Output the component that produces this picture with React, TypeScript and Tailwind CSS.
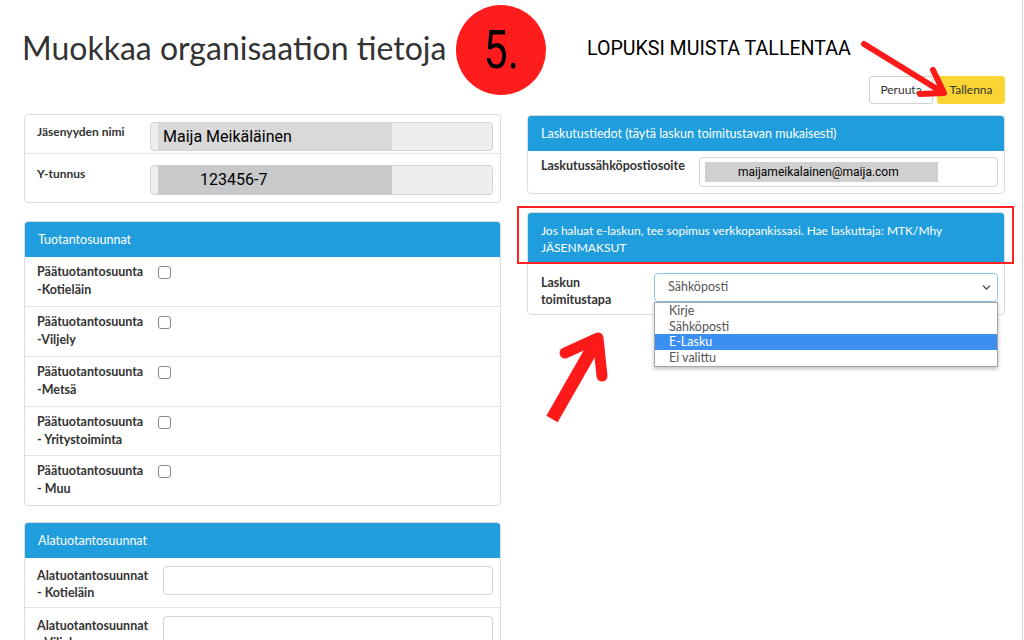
import React from "react";
import { ChevronDown } from "lucide-react";

const font = { fontFamily: "Lato, 'Open Sans', sans-serif" };

function Checkbox() {
  return <div className="mt-[9px] h-[13px] w-[13px] rounded-[3px] border border-[#8a8a8a] bg-white" />;
}

function BlueHeader({ children }: { children: React.ReactNode }) {
  return (
    <div className="h-[35px] rounded-t-[3px] bg-[#1f9ddc] pl-[13px] text-[12.5px] leading-[35px] text-white">
      {children}
    </div>
  );
}

const prodRows = [
  { a: "Päätuotantosuunta", b: "-Kotieläin", h: "h-[49px]" },
  { a: "Päätuotantosuunta", b: "-Viljely", h: "h-[50px]" },
  { a: "Päätuotantosuunta", b: "-Metsä", h: "h-[50px]" },
  { a: "Päätuotantosuunta", b: "- Yritystoiminta", h: "h-[49px]" },
  { a: "Päätuotantosuunta", b: "- Muu", h: "h-[50px]" },
];

export default function App() {
  return (
    <div className="relative flex h-[640px] w-[1024px] overflow-hidden bg-white text-[#333]" style={font}>
      <div className="w-[1022px] pl-[24px] pr-[17px]">
        {/* header */}
        <div className="flex h-[114px] items-start justify-between">
          <h1 className="-ml-[2px] pt-[27px] text-[32px] leading-[42px] text-[#333]">Muokkaa organisaation tietoja</h1>
          <div className="mt-[76px] flex gap-[4px]">
            <button className="h-[28px] w-[64px] rounded-[3px] border border-[#d0d0d0] bg-white text-[12px] text-[#333]">Peruuta</button>
            <button className="h-[28px] w-[68px] rounded-[3px] bg-[#fbd533] text-[12px] text-[#333]">Tallenna</button>
          </div>
        </div>

        <div className="grid grid-cols-[477px_478px] gap-x-[26px]">
          {/* left column */}
          <div>
            <div className="rounded-[4px] border border-[#dcdcdc] bg-white">
              <div className="flex h-[38px]">
                <div className="w-[125px] pl-[12px] pt-[9px] text-[12px] font-bold leading-[16px]">Jäsenyyden nimi</div>
                <div className="flex-1 pr-[7px] pt-[7px]">
                  <div className="flex h-[29px] rounded-[4px] border border-[#d4d4d4] bg-[#eeeeee]">
                    <div className="ml-[7px] h-full w-[234px] bg-[#d9d9d9] pl-[5px] text-[16px] leading-[27px] text-black" style={{ fontFamily: "Roboto, sans-serif" }}>
                      Maija Meikäläinen
                    </div>
                  </div>
                </div>
              </div>
              <div className="flex h-[49px] border-t border-[#e3e3e3]">
                <div className="w-[125px] pl-[12px] pt-[12px] text-[12px] font-bold leading-[16px]">Y-tunnus</div>
                <div className="flex-1 pr-[7px] pt-[11px]">
                  <div className="flex h-[30px] rounded-[4px] border border-[#d4d4d4] bg-[#eeeeee]">
                    <div className="ml-[7px] h-full w-[234px] bg-[#c7c9cb] pl-[42px] text-[16px] leading-[28px] text-black" style={{ fontFamily: "Roboto, sans-serif" }}>
                      123456-7
                    </div>
                  </div>
                </div>
              </div>
            </div>

            <div className="mt-[18px] rounded-[4px] border border-[#dcdcdc] bg-white">
              <BlueHeader>Tuotantosuunnat</BlueHeader>
              {prodRows.map((r, i) => (
                <div key={i} className={`flex ${r.h} ${i > 0 ? "border-t border-[#e3e3e3]" : ""}`}>
                  <div className="w-[133px] pl-[12px] pt-[6px] text-[12.5px] font-bold leading-[18px]">
                    <div>{r.a}</div>
                    <div>{r.b}</div>
                  </div>
                  <Checkbox />
                </div>
              ))}
            </div>

            <div className="mt-[16px] rounded-[4px] border border-[#dcdcdc] bg-white">
              <BlueHeader>Alatuotantosuunnat</BlueHeader>
              <div className="flex h-[49px]">
                <div className="w-[138px] pl-[12px] pt-[9px] text-[12.5px] font-bold leading-[17px]">
                  <div>Alatuotantosuunnat</div>
                  <div>- Kotieläin</div>
                </div>
                <div className="flex-1 pr-[7px] pt-[8px]">
                  <div className="h-[29px] rounded-[4px] border border-[#d4d4d4] bg-white" />
                </div>
              </div>
              <div className="flex h-[50px] border-t border-[#e3e3e3]">
                <div className="w-[138px] pl-[12px] pt-[9px] text-[12.5px] font-bold leading-[17px]">
                  <div>Alatuotantosuunnat</div>
                  <div>- Viljely</div>
                </div>
                <div className="flex-1 pr-[7px] pt-[8px]">
                  <div className="h-[29px] rounded-[4px] border border-[#d4d4d4] bg-white" />
                </div>
              </div>
            </div>
          </div>

          {/* right column */}
          <div className="mt-[1px]">
            <div className="rounded-[4px] border border-[#dcdcdc] bg-white">
              <BlueHeader>Laskutustiedot (täytä laskun toimitustavan mukaisesti)</BlueHeader>
              <div className="flex h-[42px]">
                <div className="w-[171px] pl-[13px] pt-[7px] text-[12.5px] font-bold leading-[16px]">Laskutussähköpostiosoite</div>
                <div className="flex-1 pr-[6px] pt-[6px]">
                  <div className="h-[30px] rounded-[4px] border border-[#d4d4d4] bg-white pl-[5px] pt-[4px]">
                    <div className="h-[20px] w-[233px] bg-[#d0d0d0] pl-[33px] text-[12px] leading-[20px] text-black" style={{ fontFamily: "Roboto, sans-serif" }}>
                      maijameikalainen@maija.com
                    </div>
                  </div>
                </div>
              </div>
            </div>

            <div className="mt-[18px] rounded-[4px] border border-[#dcdcdc] bg-white">
              <div className="h-[50px] rounded-t-[3px] bg-[#1f9ddc] pl-[13px] pt-[9px] text-[12px] leading-[17px] text-white">
                Jos haluat e-laskun, tee sopimus verkkopankissasi. Hae laskuttaja: MTK/Mhy
                <br />
                JÄSENMAKSUT
              </div>
              <div className="flex h-[51px]">
                <div className="w-[126px] pl-[13px] pt-[11px] text-[12.5px] font-bold leading-[17px]">
                  <div>Laskun</div>
                  <div>toimitustapa</div>
                </div>
                <div className="relative flex-1 pr-[6px] pt-[10px]">
                  <div className="flex h-[29px] items-center justify-between rounded-[4px] border border-[#8fc3f0] bg-white pl-[13px] pr-[4px] text-[12.5px] text-[#555]">
                    <span>Sähköposti</span>
                    <ChevronDown size={13} strokeWidth={2.5} className="text-[#444]" />
                  </div>
                  <div className="absolute left-0 right-[6px] top-[39px] z-10 border border-[#a3a3a3] bg-white text-[12.5px] leading-[16px] text-[#555] shadow-[0_2px_4px_rgba(0,0,0,0.25)]">
                    <div className="h-[16px] pl-[14px]">Kirje</div>
                    <div className="h-[15px] pl-[14px]">Sähköposti</div>
                    <div className="h-[16px] bg-[#3a8ff0] pl-[14px] text-white">E-Lasku</div>
                    <div className="h-[16px] pl-[14px]">Ei valittu</div>
                  </div>
                </div>
              </div>
            </div>
          </div>
        </div>
      </div>
      <div className="h-full w-px bg-[#d8d8d8]" />
      <div className="h-full w-px bg-white" />

      {/* annotations */}
      <div className="absolute left-[456px] top-[5px] flex h-[90px] w-[90px] items-center justify-center rounded-full bg-[#ff1c1c]">
        <span className="scale-x-[0.8] text-[54px] leading-none text-black" style={{ fontFamily: "Roboto, sans-serif" }}>5.</span>
      </div>
      <div className="absolute left-[587px] top-[36px] origin-left scale-x-[0.98] text-[20px] leading-[24px] text-black" style={{ fontFamily: "Roboto, sans-serif" }}>
        LOPUKSI MUISTA TALLENTAA
      </div>
      <div className="absolute left-[517px] top-[206px] h-[58px] w-[497px] border-2 border-[#ff2020]" />
      <svg className="pointer-events-none absolute left-0 top-0" width="1024" height="640">
        <g stroke="#ff1a1a" fill="none" strokeLinecap="round" strokeLinejoin="round">
          <line x1="864" y1="44" x2="942" y2="92" strokeWidth="6" />
          <polyline points="933,70 944,93 920,94" strokeWidth="6" />
          <line x1="552" y1="419" x2="596" y2="342" strokeWidth="13" strokeLinecap="butt" />
          <polyline points="565,353 598,338 602,376" strokeWidth="11" />
        </g>
      </svg>
    </div>
  );
}
